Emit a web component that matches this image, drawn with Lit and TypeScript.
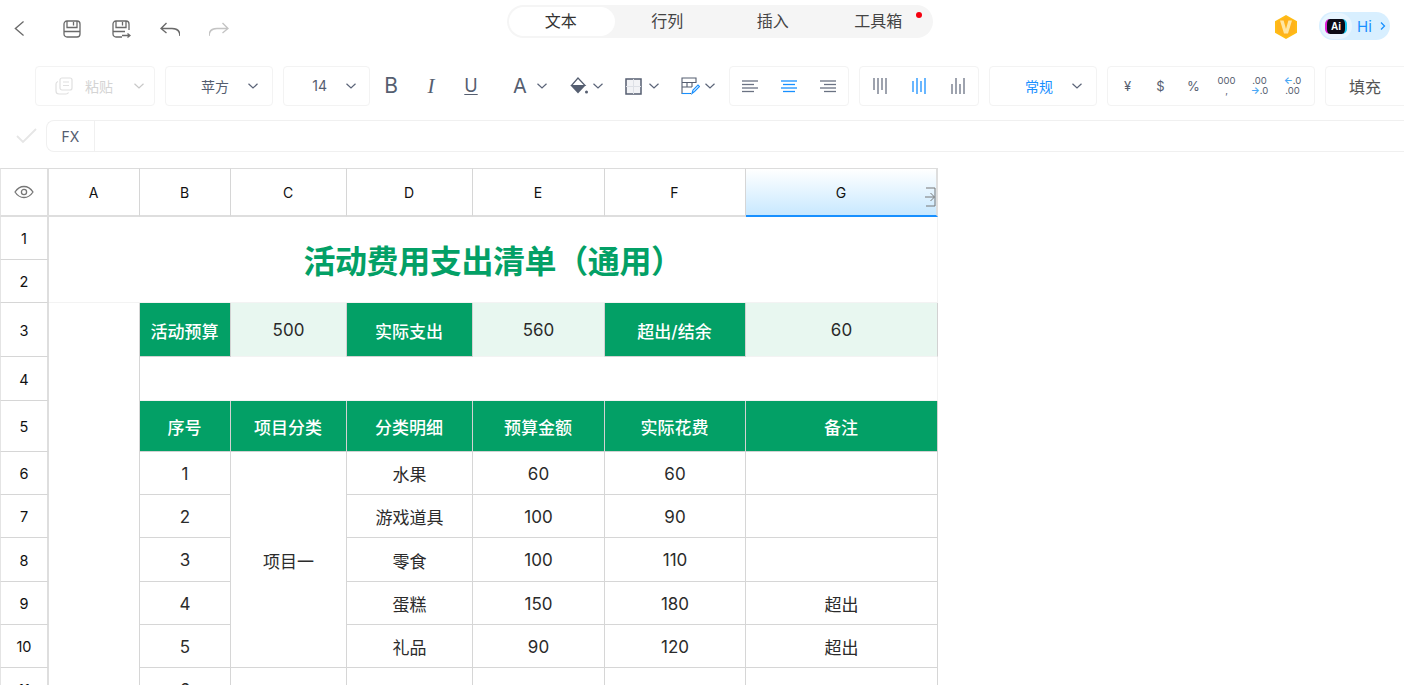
import { LitElement, html, css, svg } from "lit";
import { customElement } from "lit/decorators.js";

const chev = (c = "#5b6478") => html`<svg class="chev" width="12" height="12" viewBox="0 0 12 12" fill="none" stroke=${c} stroke-width="1.2"><path d="M1.5 3.8 6 8l4.500-4.200"/></svg>`;
const lines = (rows: number[][], c: string) => html`<svg width="18" height="18" viewBox="0 0 18 18" stroke=${c} stroke-width="1.3">${rows.map(r => svg`<path d="M${r[0]} ${r[1]}H${r[2]}"/>`)}</svg>`;
const vlines = (rows: number[][], c: string) => html`<svg width="18" height="18" viewBox="0 0 18 18" stroke=${c} stroke-width="1.3">${rows.map(r => svg`<path d="M${r[0]} ${r[1]}V${r[2]}"/>`)}</svg>`;

const cols = [49, 91, 91, 116, 126, 132, 141, 192];
const rows = [49, 43, 43, 54, 44, 51, 43, 43, 44, 43, 43, 43];

type Cell = { c: number; r: number; t?: string; cs?: number; rs?: number; k?: string };
const cells: Cell[] = [];
cells.push({ c: 1, r: 1, k: "corner" });
"ABCDEFG".split("").forEach((t, i) => cells.push({ c: i + 2, r: 1, t, k: t === "G" ? "colh sel" : "colh" }));
rows.slice(1).forEach((_, i) => cells.push({ c: 1, r: i + 2, t: String(i + 1), k: "rowh" }));
cells.push({ c: 2, r: 2, cs: 7, rs: 2, t: "活动费用支出清单（通用）", k: "title" });
cells.push({ c: 2, r: 4, rs: 9, k: "blank" });
[["活动预算", "500"], ["实际支出", "560"], ["超出/结余", "60"]].forEach((p, i) => {
  const s = [3, 5, 7][i];
  cells.push({ c: s, r: 4, t: p[0], k: "head" });
  cells.push({ c: s + 1, r: 4, t: p[1], k: "soft" });
});
cells.push({ c: 3, r: 5, cs: 6, k: "blank" });
["序号", "项目分类", "分类明细", "预算金额", "实际花费", "备注"].forEach((t, i) => cells.push({ c: i + 3, r: 6, t, k: "head" }));
cells.push({ c: 4, r: 7, rs: 5, t: "项目一", k: "body" });
cells.push({ c: 4, r: 12, k: "body" });
[
  ["1", "水果", "60", "60", ""],
  ["2", "游戏道具", "100", "90", ""],
  ["3", "零食", "100", "110", ""],
  ["4", "蛋糕", "150", "180", "超出"],
  ["5", "礼品", "90", "120", "超出"],
  ["6", "", "", "", ""],
].forEach((row, i) => {
  const cc = [3, 5, 6, 7, 8];
  row.forEach((t, j) => cells.push({ c: cc[j], r: 7 + i, t, k: "body" }));
});

@customElement("app-root")
export class AppRoot extends LitElement {
  static styles = css`
    :host { display: block; width: 1404px; height: 685px; overflow: hidden; background: #fff; position: relative;
      font-family: Inter, "Noto Sans CJK SC", sans-serif; color: #222; }
    svg { display: block; flex: none; }
    .top { height: 38px; padding-top: 5px; display: flex; align-items: flex-start; }
    .actions { width: 507px; height: 38px; display: flex; align-items: center; padding-top: 9px; box-sizing: border-box; padding-left: 10px; }
    .actions .ic { width: 20px; height: 20px; }
    .actions .back { margin-right: 32px; }
    .actions .act { margin-right: 29px; }
    .tabs { width: 426px; height: 33px; box-sizing: border-box; padding: 2px; border-radius: 17px; background: #f5f5f5; display: flex; position: relative; font-size: 16px; color: #444; }
    .tab { width: 106px; box-sizing: border-box; padding: 0 0 3px 0; display: flex; align-items: center; justify-content: center; border-radius: 15px; }
    .tab.on { background: #fff; color: #333; padding-right: 2px; }
    .dot { position: absolute; left: 409px; top: 7px; width: 6px; height: 6px; border-radius: 50%; background: #f5000f; }
    .right { margin-left: auto; margin-right: 14px; display: flex; align-items: center; gap: 20px; height: 28px; margin-top: 7px; }
    .badge { margin-top: 2px; }
    .pill { width: 71px; height: 28px; border-radius: 14px; background: #d8efff; display: flex; align-items: center; position: relative; box-sizing: border-box; padding-left: 38px; gap: 7px; color: #1890ff; font-size: 15px; }
    .halo { position: absolute; left: 2px; top: 1px; width: 31px; height: 26px; border-radius: 13px; background: #e8f5ff; }
    .ai { position: absolute; left: 6px; top: 7px; width: 22px; height: 15px; box-sizing: border-box; border-radius: 5px; background: #0b0b16; border-left: 2px solid #e020d8; border-right: 2px solid #18c8f0; color: #fff; font: 700 10px/15px "Liberation Sans", sans-serif; text-align: center; }
    .bar { margin-top: 23px; height: 40px; display: flex; gap: 10px; padding-left: 35px; font-size: 14px; color: #555e70; }
    .box { border: 1px solid #f3f3f3; border-radius: 4px; box-sizing: border-box; height: 40px; display: flex; align-items: center; flex: none; }
    .sel { justify-content: flex-end; }
    .sel span { padding-bottom: 1px; }
    .paste { width: 120px; padding-right: 9px; gap: 20px; color: #d4d4d4; }
    .paste .pi { margin-right: -8px; }
    .font { width: 108px; padding-right: 13px; gap: 18px; }
    .size { width: 87px; padding-right: 12px; gap: 18px; font-size: 14px; }
    .tools { width: 339px; display: flex; align-items: center; gap: 18px; flex: none; }
    .tool { width: 22px; display: flex; justify-content: center; font-size: 0; }
    .glyph { font-size: 21px; line-height: 22px; color: #555e70; font-family: Inter, sans-serif; font-weight: 400; }
    .i { font-style: italic; font-family: "Liberation Serif", serif; }
    .u { text-decoration: underline; text-underline-offset: 2px; text-decoration-thickness: 1px; font-size: 18px; }
    .a { font-size: 20px; }
    .groups { display: flex; gap: 20px; margin-left: 13px; }
    .grp { width: 35px; display: flex; align-items: center; justify-content: space-between; margin-right: 1px; }
    .trio { width: 120px; justify-content: space-around; padding: 0 1px; }
    .fmt { width: 108px; padding-right: 13px; gap: 18px; color: #1890ff; }
    .nums { width: 208px; padding: 0 2px 0 3px; color: #555e70; }
    .num { width: 33px; text-align: center; font-size: 13px; line-height: 10px; }
    .num.s { font-size: 9.5px; }
    .num b { color: #4aa8f5; font-weight: 700; }
    .fill { width: 90px; justify-content: flex-start; padding-left: 23px; font-size: 16px; color: #555; }
    .fx { margin-top: 14px; height: 32px; display: flex; align-items: center; padding-left: 15px; }
    .fxb { width: 1400px; margin-left: 7px; height: 32px; box-sizing: border-box; border: 1px solid #f0f0f0; border-right: none; border-radius: 8px 0 0 8px; display: flex; flex: none; }
    .fxl { width: 47px; border-right: 1px solid #f0f0f0; display: flex; align-items: center; justify-content: center; font-size: 14px; color: #555e70; }
    .sheet { margin-top: 16px; display: grid; width: 938px; position: relative; }
    .cell { box-sizing: border-box; border-right: 1px solid #d6d6d6; border-bottom: 1px solid #d6d6d6; display: flex; align-items: center; justify-content: center; font-size: 17px; color: #2b2b2b; min-width: 0; }
    .colh { font-size: 14px; color: #111; border-top: 1px solid #dcdcdc; border-bottom: 2px solid #dedede; font-family: Inter, sans-serif; padding-right: 1px; }
    .corner { border-top: 1px solid #dcdcdc; border-left: 1px solid #e4e4e4; border-right: 2px solid #dedede; border-bottom: 2px solid #dedede; }
    .rowh { font-size: 14.5px; color: #111; border-left: 1px solid #e4e4e4; border-right: 2px solid #dedede; padding-top: 1px; }
    .colh.sel { background: linear-gradient(#fff, #c8e8ff); border-bottom: 2px solid #1890ff; border-right: 2px solid #dedede; position: relative; padding-right: 0; }
    .expand { position: absolute; right: 0; top: 18px; }
    .title { font-size: 32px; font-weight: 700; color: #03a066; border-right: 1px solid #f3f3f3; border-bottom: 1px solid #f3f3f3; letter-spacing: -0.4px; padding-bottom: 2px; }
    .blank { border-bottom: none; border-right: 1px solid #d6d6d6; }
    .cell.blank[data-w] { border-right: 1px solid #f3f3f3; border-bottom: 1px solid #f3f3f3; }
    .head { background: #03a066; color: #fff; font-weight: 500; border-right: 1px solid #d2d2d2; border-bottom: 1px solid #d2d2d2; padding: 1px 1px 0 0; }
    .soft { background: #e8f7f0; border-right: 1px solid #d2d2d2; border-bottom: 1px solid #f3f3f3; padding-top: 1px; }
    .body { white-space: nowrap; padding-top: 1px; }
  `;

  render() {
    const ic = "#6a6a6a";
    return html`
      <div class="top">
        <div class="actions">
          <svg class="ic back" viewBox="0 0 20 20" fill="none" stroke=${ic} stroke-width="1.5"><path d="M14.500 3.500 5.500 10.500l9 7" transform="matrix(.9 0 0 1 .5 -1)"/></svg>
          <svg class="ic act" viewBox="0 0 20 20" fill="none" stroke=${ic} stroke-width="1.3"><rect x="2" y="2" width="16" height="16" rx="3"/><path d="M5 2v6.500h10V2M11.500 3v3.500M2 12.500h16"/></svg>
          <svg class="ic act" viewBox="0 0 20 20" fill="none" stroke=${ic} stroke-width="1.300"><path d="M11 18H5a3 3 0 0 1-3-3V5a3 3 0 0 1 3-3h10a3 3 0 0 1 3 3v6M5 2v6.500h10V2M11.500 3v3.500M2 12.500h12M11 16.500h8M16.500 14.500l2.500 2-2.500 2"/></svg>
          <svg class="ic act" viewBox="0 0 20 20" fill="none" stroke=${ic} stroke-width="1.4"><path d="M20 17c0-5-3-7.500-8-7.500H1M6.500 4 1 9.500 6.500 14"/></svg>
          <svg class="ic" viewBox="0 0 20 20" fill="none" stroke="#c4c4c4" stroke-width="1.4"><path d="M0 17c0-5 3-7.500 8-7.500h11M13.500 4 19 9.500 13.500 14"/></svg>
        </div>
        <div class="tabs">
          <div class="tab on">文本</div><div class="tab">行列</div><div class="tab">插入</div><div class="tab">工具箱</div>
          <span class="dot"></span>
        </div>
        <div class="right">
          <svg class="badge" width="26" height="26" viewBox="0 0 26 26"><path d="M13 1l11 6.200v11.600L13 25 2 18.800V7.200z" fill="#ffbc14"/><path d="M13 3l9 5.200v9.600L13 23 4 17.800V8.200z" fill="#ffb31c"/><path d="M7 6.500h3.600L13 15l2.400-8.500H19l-4 13h-4z" fill="#ffe6a3"/></svg>
          <div class="pill"><span class="halo"></span><span class="ai">Ai</span><span>Hi</span>
            <svg width="8" height="10" viewBox="0 0 8 10" fill="none" stroke="#1890ff" stroke-width="1.300"><path d="M2 1.500 5.500 5 2 8.500"/></svg>
          </div>
        </div>
      </div>

      <div class="bar">
        <div class="box sel paste">
          <svg class="pi" width="18" height="18" viewBox="0 0 18 18" fill="none" stroke="#e0e0e0" stroke-width="1.200"><rect x="5" y="1" width="12" height="12" rx="2"/><path d="M3 4.500C1.500 5 1 5.500 1 7v7a3 3 0 0 0 3 3h7c1.500 0 2-.5 2.500-1.500M8 5h6M8 8.500h6"/></svg>
          <span>粘贴</span>${chev("#c8c8c8")}
        </div>
        <div class="box sel font"><span>苹方</span>${chev()}</div>
        <div class="box sel size"><span>14</span>${chev()}</div>
        <div class="tools">
          <div class="tool"><span class="glyph">B</span></div>
          <div class="tool"><span class="glyph i">I</span></div>
          <div class="tool"><span class="glyph u">U</span></div>
          <div class="groups">
            <div class="grp"><span class="glyph a">A</span>${chev()}</div>
            <div class="grp">
              <svg width="20" height="20" viewBox="0 0 20 20"><path d="M9 2l7 7.500H2.500z" fill="none" stroke="#555e70" stroke-width="1.200"/><path d="M2 10h14l-7 7.500z" fill="#555e70"/><circle cx="17.500" cy="16" r="1.500" fill="#555e70"/></svg>
              ${chev()}
            </div>
            <div class="grp">
              <svg width="17" height="17" viewBox="0 0 17 17" fill="none"><rect x="1" y="1" width="15" height="15" fill="#f2f3f6" stroke="#555e70" stroke-width="1.500"/><path d="M8.500 1v15M1 8.500h15" stroke="#dde0e6"/></svg>
              ${chev()}
            </div>
            <div class="grp">
              <svg width="19" height="18" viewBox="0 0 19 18" fill="none" stroke="#555e70" stroke-width="1.100"><path d="M1 5.500h14V1H1v15.500h9M1 10h10M6 5.500V10M11 5.500V10"/><path d="M1 16.500h8" stroke="#1890ff"/><path d="M11 16.500l1-3.500 5-5 1.500 1.500-5 5z" stroke="#1890ff"/></svg>
              ${chev()}
            </div>
          </div>
        </div>
        <div class="box trio">
          ${lines([[1, 4, 17], [1, 7.500, 13], [1, 11, 17], [1, 14.500, 13]], "#6a7283")}
          ${lines([[1, 4, 17], [3, 7.500, 15], [1, 11, 17], [3, 14.500, 15]], "#1890ff")}
          ${lines([[1, 4, 17], [5, 7.500, 17], [1, 11, 17], [5, 14.500, 17]], "#6a7283")}
        </div>
        <div class="box trio">
          ${vlines([[3, 1, 13], [7, 1, 17], [11, 1, 13], [15, 1, 17]], "#6a7283")}
          ${vlines([[3, 4, 15], [7, 1, 17], [11, 4, 15], [15, 1, 17]], "#1890ff")}
          ${vlines([[3, 7, 17], [7, 1, 17], [11, 7, 17], [15, 1, 17]], "#6a7283")}
        </div>
        <div class="box sel fmt"><span>常规</span>${chev()}</div>
        <div class="box nums">
          <div class="num">¥</div><div class="num">$</div><div class="num">%</div>
          <div class="num s">000<br>,</div>
          <div class="num s">.00<br><b>→</b>.0</div>
          <div class="num s"><b>←</b>.0<br>.00</div>
        </div>
        <div class="box fill">填充</div>
      </div>

      <div class="fx">
        <svg width="24" height="18" viewBox="0 0 24 18" fill="none" stroke="#e6e6e6" stroke-width="1.800"><path d="M2 9l6 6L21 2"/></svg>
        <div class="fxb"><div class="fxl">FX</div></div>
      </div>

      <div class="sheet" style="grid-template-columns:${cols.map(c => c + "px").join(" ")};grid-template-rows:${rows.map(r => r + "px").join(" ")}">
        ${cells.map(x => html`<div class="cell ${x.k}" ?data-w=${x.k === "blank" && x.c === 3}
          style="grid-column:${x.c} / span ${x.cs ?? 1};grid-row:${x.r} / span ${x.rs ?? 1}">
          ${x.k === "corner" ? html`<svg width="20" height="14" viewBox="0 0 20 14" fill="none" stroke="#777" stroke-width="1.300"><path d="M1 7c2.500-3.800 5.500-5.500 9-5.500s6.500 1.700 9 5.500c-2.500 3.800-5.500 5.500-9 5.500S3.500 10.800 1 7z"/><circle cx="10" cy="7" r="2.600"/></svg>` : x.t}
          ${x.t === "G" ? html`<svg class="expand" width="11" height="20" viewBox="0 0 11 20" fill="none" stroke="#777" stroke-width="1"><path d="M1 1h9v18H1M0 10h9M5.500 6l4 4-4 4"/></svg>` : ""}
        </div>`)}
      </div>
    `;
  }
}
